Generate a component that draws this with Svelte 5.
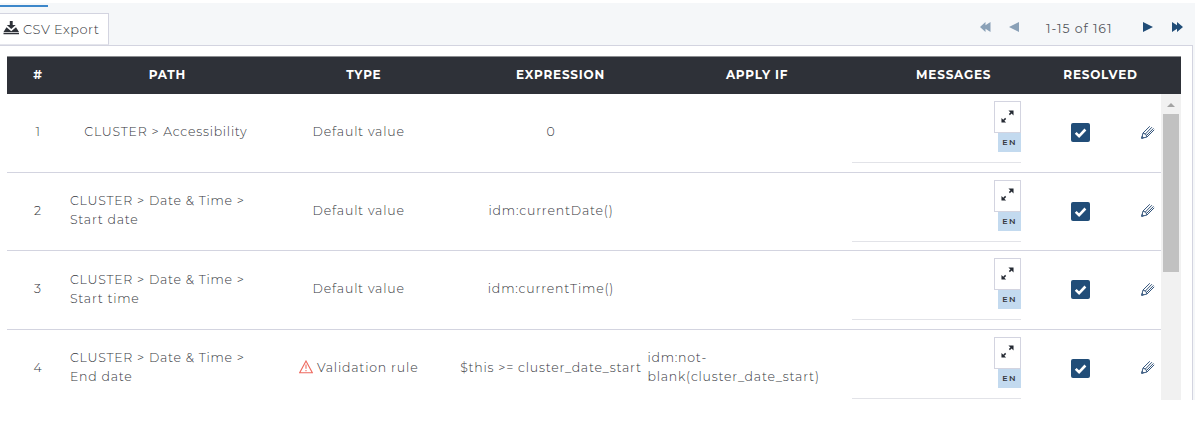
<script>
  const headers = ['#', 'PATH', 'TYPE', 'EXPRESSION', 'APPLY IF', 'MESSAGES', 'RESOLVED', ''];
  const rows = [
    { id: 1, path: ['CLUSTER > Accessibility'], type: 'Default value', expression: '0', applyIf: [] },
    { id: 2, path: ['CLUSTER > Date & Time >', 'Start date'], type: 'Default value', expression: 'idm:currentDate()', applyIf: [] },
    { id: 3, path: ['CLUSTER > Date & Time >', 'Start time'], type: 'Default value', expression: 'idm:currentTime()', applyIf: [] },
    { id: 4, path: ['CLUSTER > Date & Time >', 'End date'], type: 'Validation rule', warning: true, expression: '$this >= cluster_date_start', applyIf: ['idm:not-', 'blank(cluster_date_start)'] }
  ];
</script>

<div class="page">
  <div class="tabline"></div>
  <div class="toolbar">
    <button class="export">
      <svg width="17" height="14" viewBox="0 0 17 14" fill="#2e3138"><path d="M6.800 0h2.900v4h3L8.250 8 3.800 4h3zM3.500 6.200L8.250 10.200 13 6.200l3 4.800H.5zM.5 11.800h15.500v1.400H.5z" /></svg>
      <span>CSV Export</span>
    </button>
    <div class="pager">
      <svg class="dim first" width="11" height="10" viewBox="0 0 11 10"><path d="M5.500 0v3.200L10.500 0v10L5.500 6.800V10L0 5z" /></svg>
      <svg class="dim prev" width="10" height="10" viewBox="0 0 10 10"><path d="M10 0v10L0 5z" /></svg>
      <span class="range">1-15 of 161</span>
      <svg class="next" width="10" height="10" viewBox="0 0 10 10"><path d="M0 0v10l10-5z" /></svg>
      <svg class="last" width="11" height="10" viewBox="0 0 11 10"><path d="M0 0l5 3.200V0l6 5-6 5V6.800L0 10z" /></svg>
    </div>
  </div>

  <div class="panel">
    <div class="thead">
      {#each headers as h}<div>{h}</div>{/each}
    </div>
    <div class="tbody">
      <div class="rows">
        {#each rows as r}
          <div class="row">
            <div class="num">{r.id}</div>
            <div class="path"><div>{#each r.path as line}<div>{line}</div>{/each}</div></div>
            <div class="type">
              {#if r.warning}
                <svg width="14" height="14" viewBox="0 0 14 14" fill="none" stroke="#ee6a5f" stroke-width="1.100"><path d="M7 1L13.300 12.700H.7zM7 4.500v4.300M7 10v1.300" /></svg>
              {/if}
              <span>{r.type}</span>
            </div>
            <div class="expr" class:long={r.expression.length > 20}>{r.expression}</div>
            <div class="apply"><div>{#each r.applyIf as line}<div>{line}</div>{/each}</div></div>
            <div class="messages">
              <div class="field">
                <button class="expand" aria-label="Expand">
                  <svg width="13" height="13" viewBox="0 0 14 14" fill="#252a33" stroke="#252a33"><path stroke="none" d="M8 .5h5.500V6zM.5 8.500v5H5.500z" /><path stroke-width="1.600" d="M9 5l2.500-2.500M2.500 11.500L5 9" /></svg>
                </button>
                <span class="lang">EN</span>
              </div>
            </div>
            <div class="resolved">
              <svg width="19" height="19" viewBox="0 0 19 19"><rect width="19" height="19" rx="2" fill="#214d78" /><path d="M4.700 9.800l3.400 3.400L14.400 6.500" fill="none" stroke="#fff" stroke-width="2.600" /></svg>
            </div>
            <div class="edit">
              <svg width="14" height="14" viewBox="0 0 14 14" fill="none" stroke="#34557c" stroke-width="1"><path d="M.7 13.300L2 8 8.800 1.300M.7 13.300L6 12l7.200-7.200M2 8Q5.500 8.500 6 12M4.200 9.200l6.700-7M5.500 10.500L12.500 3.400M.7 13.300l1.800-.5-1.300-1.500z" /></svg>
            </div>
          </div>
        {/each}
      </div>
      <div class="scroll"><div class="arrow"></div><div class="thumb"></div></div>
    </div>
  </div>
</div>

<style>
  :global(body) { background: #fff; overflow: hidden; }
  :global(#app) { display: flow-root; }
  .page { box-sizing: border-box; margin-top: 3px; padding-top: 2px; height: 397px; width: 1195px; background: #f5f7f9; color: #35373d; font: 300 13px/19px Montserrat, Inter, sans-serif; display: flex; flex-direction: column; overflow: hidden; }
  .tabline { width: 48px; height: 2px; background: #3d87ca; flex: none; }
  .toolbar { height: 38px; flex: none; display: flex; justify-content: space-between; align-items: flex-end; }
  button { font: inherit; color: inherit; box-sizing: border-box; background: #fff; border: 1px solid #d3d4e0; padding: 0; }
  .export { display: flex; align-items: center; width: 109px; height: 32px; border-left: 0; padding-left: 3px; letter-spacing: .45px; font-size: 13px; white-space: nowrap; border-bottom-color: #e4e5ec; }
  .export svg { margin-right: 3px; margin-top: -3px; }
  .export span { padding-top: 1px; }
  .pager { display: flex; align-items: center; height: 36px; padding-right: 12px; fill: #214d78; }
  .dim { opacity: .5; }
  .prev { margin-left: 18px; }
  .range { width: 75px; margin: 2px 22px 0 27px; font-size: 12.500px; font-weight: 400; color: #55575d; letter-spacing: .95px; white-space: nowrap; }
  .last { margin-left: 19px; }
  .panel { box-sizing: border-box; flex: 1; min-height: 0; width: 1193px; background: #fff; border-top: 1px solid #d3d4e0; border-right: 1px solid #d3d4e0; padding: 10px 11px 0 7px; }
  .thead { display: grid; grid-template-columns: 62px repeat(5, 1fr) 97px 32px; height: 38px; box-sizing: border-box; border-top: 1px solid #8c8e91; background: #2e3138; color: #fff; font-weight: 700; font-size: 12px; letter-spacing: .8px; line-height: 35px; text-align: center; }
  .tbody { display: flex; height: 306px; overflow: hidden; }
  .rows { flex: 1; }
  .row { box-sizing: border-box; display: grid; grid-template-columns: 62px repeat(5, minmax(0, 1fr)) 97px 31px; height: 78.500px; border-bottom: 1px solid #d3d4e0; letter-spacing: .83px; font-size: 12.500px; white-space: nowrap; }
  .row > div { display: flex; align-items: center; justify-content: center; }
  .row > div:not(.messages) { padding-bottom: 2px; }
  .row .path { padding-left: 1px; letter-spacing: .76px; }
  .row .apply { justify-content: flex-start; letter-spacing: .8px; }
  .row:not(:first-child) .path { justify-content: flex-start; }
  .row .type { padding-left: 1px; }
  .type svg { margin-right: 4px; margin-top: -1px; }
  .row .expr.long { letter-spacing: .78px; }
  .row .messages { align-items: flex-start; padding-top: 7px; }
  .field { width: 169px; height: 61px; border-bottom: 1px solid #e2e3e8; display: flex; flex-direction: column; align-items: flex-end; }
  .expand { width: 27px; height: 32px; display: flex; align-items: center; justify-content: center; padding-bottom: 2px; }
  .lang { width: 23px; height: 19px; background: #c3daef; font-size: 8px; font-weight: 600; line-height: 18px; letter-spacing: 1.300px; text-align: center; }
  .row .resolved { padding-right: 2px; }
  .row > .resolved:not(.messages) { padding-bottom: 0; }
  .row .edit { padding-left: 4px; }
  .scroll { width: 20px; background: #f1f1f1; display: flex; flex-direction: column; align-items: center; }
  .arrow { border: 4px solid transparent; border-top: 0; border-bottom: 4px solid #a3a3a3; margin: 9px 0 7px; }
  .thumb { width: 16px; height: 158px; background: #c1c1c1; }
</style>
